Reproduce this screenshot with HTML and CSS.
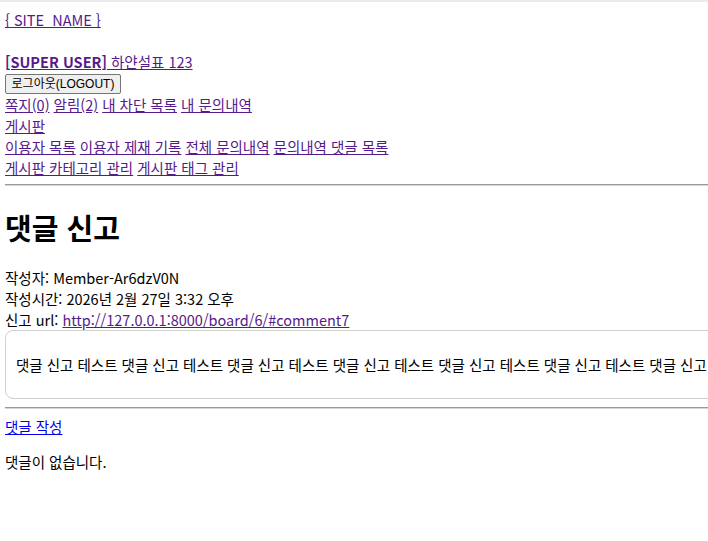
FILE: index.html
```html
<!DOCTYPE html>
<html lang="ko">
<head>
<meta charset="utf-8">
<title>댓글 신고</title>
<link rel="stylesheet" href="styles.css">
</head>
<body>
<div class="topline"></div>
<div class="page">
  <header class="header">
    <div class="line"><a class="link visited" href="#">{ SITE_NAME }</a></div>
    <div class="spacer"></div>
    <div class="line"><a class="link visited" href="#"><b>[SUPER USER]</b> 하얀설표 123</a></div>
    <button class="logout" type="button">로그아웃(LOGOUT)</button>
    <nav class="nav">
      <div class="line"><a class="link visited" href="#">쪽지(0)</a> <a class="link visited" href="#">알림(2)</a> <a class="link visited" href="#">내 차단 목록</a> <a class="link visited" href="#">내 문의내역</a></div>
      <div class="line"><a class="link visited" href="#">게시판</a></div>
      <div class="line"><a class="link visited" href="#">이용자 목록</a> <a class="link visited" href="#">이용자 제재 기록</a> <a class="link visited" href="#">전체 문의내역</a> <a class="link visited" href="#">문의내역 댓글 목록</a></div>
      <div class="line"><a class="link visited" href="#">게시판 카테고리 관리</a> <a class="link visited" href="#">게시판 태그 관리</a></div>
    </nav>
  </header>
  <hr class="rule rule-top">
  <main>
    <h1 class="title">댓글 신고</h1>
    <div class="line">작성자: Member-Ar6dzV0N</div>
    <div class="line">작성시간: 2026년 2월 27일 3:32 오후</div>
    <div class="line">신고 url: <a class="link visited" href="#">http://127.0.0.1:8000/board/6/#comment7</a></div>
    <div class="comment-box">댓글 신고 테스트 댓글 신고 테스트 댓글 신고 테스트 댓글 신고 테스트 댓글 신고 테스트 댓글 신고 테스트 댓글 신고 테스트 댓글 신고 테스트 댓글 신고 테스트 댓글 신고 테스트</div>
    <hr class="rule rule-bottom">
    <div class="line"><a class="link fresh" href="#">댓글 작성</a></div>
    <p class="empty">댓글이 없습니다.</p>
  </main>
</div>
</body>
</html>
```
FILE: styles.css
```css
html, body {
  margin: 0;
  padding: 0;
  overflow: hidden;
  background: #ffffff;
}
body {
  font-family: "Noto Sans CJK KR", "Noto Sans", sans-serif;
  font-size: 14.5px;
  line-height: 21px;
  color: #000;
}
.topline {
  height: 2px;
  background: #ebebeb;
}
.page {
  width: 1200px;
  padding: 7px 5px 0 5px;
}
.line {
  height: 21px;
  white-space: nowrap;
}
.spacer {
  height: 21px;
}
.link {
  text-decoration: underline;
}
.visited {
  color: #551a8b;
}
.fresh {
  color: #0000ee;
}
.logout {
  display: block;
  margin: 2px 0 0 0;
  height: 20px;
  width: 116px;
  padding: 0 4px;
  white-space: nowrap;
  font-family: "Liberation Sans", "Noto Sans CJK KR", sans-serif;
  font-size: 12px;
  line-height: 16px;
  color: #000;
  background: #efefef;
  border: 1px solid #767676;
  border-radius: 2px;
}
.rule {
  height: 0;
  margin: 0;
  border: none;
  border-top: 1px solid #9a9a9a;
  border-bottom: 1px solid #d6d6d6;
}
.rule-top {
  margin-top: 6px;
}
.title {
  margin: 21px 0 20px 0;
  font-size: 29px;
  line-height: 40px;
  font-weight: 700;
}
.comment-box {
  padding: 23px 10px;
  border: 1px solid #cfcfcf;
  border-radius: 8px;
  white-space: nowrap;
}
.rule-bottom {
  margin-top: 8px;
  margin-bottom: 7px;
}
.empty {
  margin: 14px 0 0 0;
}
```
